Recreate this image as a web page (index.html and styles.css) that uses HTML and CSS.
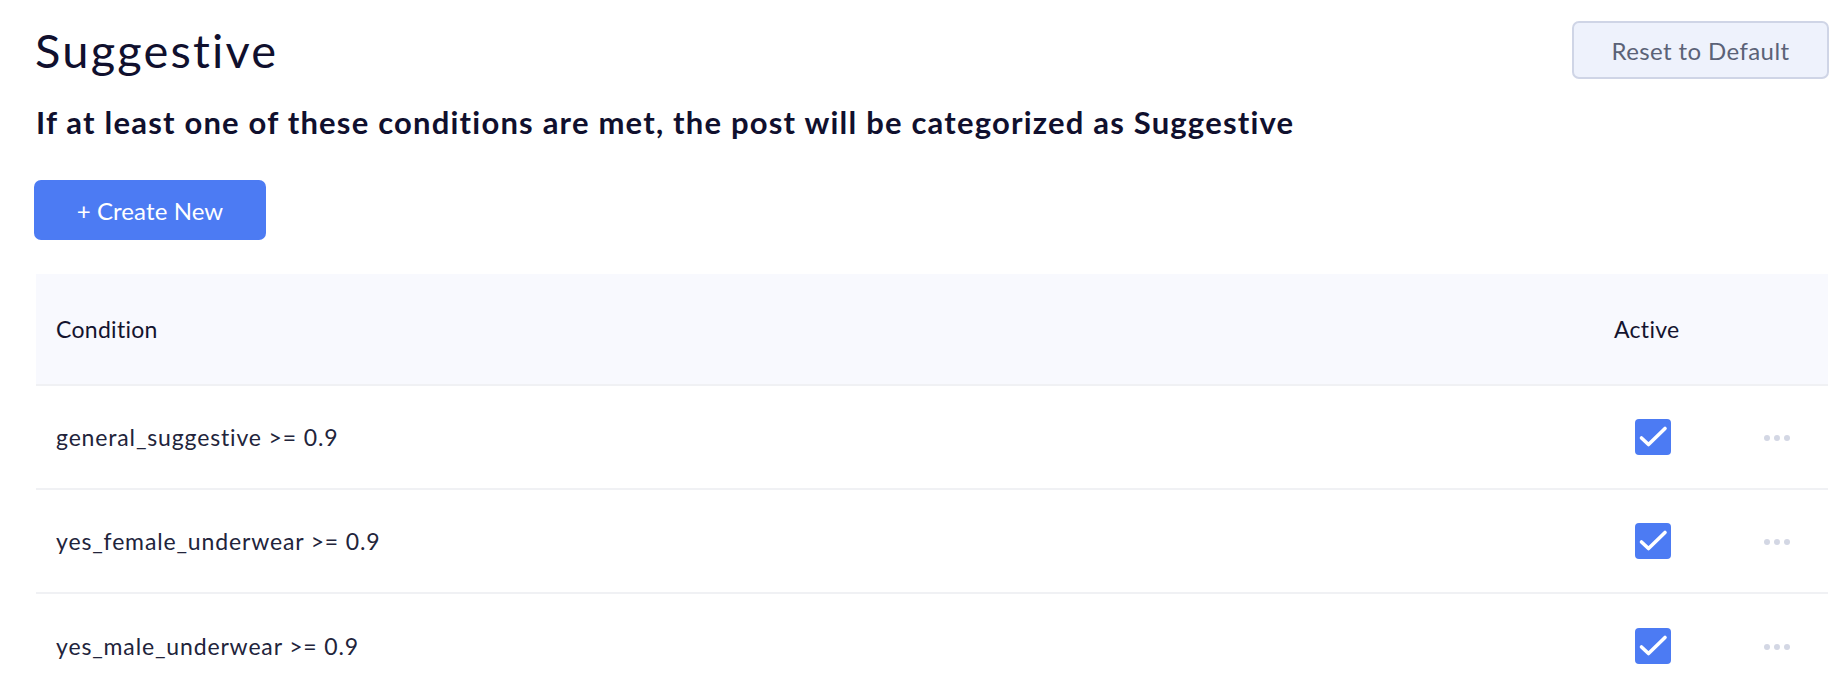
FILE: index.html
```html
<!DOCTYPE html>
<html lang="en">
<head>
<meta charset="utf-8">
<title>Suggestive</title>
<link rel="stylesheet" href="styles.css">
</head>
<body>
<div class="page">
  <div class="top">
    <h1 class="title">Suggestive</h1>
    <button class="btn-reset">Reset to Default</button>
  </div>
  <h2 class="subtitle">If at least one of these conditions are met, the post will be categorized as Suggestive</h2>
  <button class="btn-create">+ Create New</button>
  <div class="table">
    <div class="row head">
      <div class="cell cond">Condition</div>
      <div class="cell active">Active</div>
      <div class="cell actions"></div>
    </div>
    <div class="row">
      <div class="cell cond">general_suggestive &gt;= 0.9</div>
      <div class="cell active"><span class="check"><svg width="36" height="36" viewBox="0 0 36 36"><polyline points="6.5,19 13.5,25.5 30,9.5" fill="none" stroke="#fff" stroke-width="3.6" stroke-linecap="round" stroke-linejoin="round"/></svg></span></div>
      <div class="cell actions"><span class="dots"><i></i><i></i><i></i></span></div>
    </div>
    <div class="row">
      <div class="cell cond">yes_female_underwear &gt;= 0.9</div>
      <div class="cell active"><span class="check"><svg width="36" height="36" viewBox="0 0 36 36"><polyline points="6.5,19 13.5,25.5 30,9.5" fill="none" stroke="#fff" stroke-width="3.6" stroke-linecap="round" stroke-linejoin="round"/></svg></span></div>
      <div class="cell actions"><span class="dots"><i></i><i></i><i></i></span></div>
    </div>
    <div class="row">
      <div class="cell cond">yes_male_underwear &gt;= 0.9</div>
      <div class="cell active"><span class="check"><svg width="36" height="36" viewBox="0 0 36 36"><polyline points="6.5,19 13.5,25.5 30,9.5" fill="none" stroke="#fff" stroke-width="3.6" stroke-linecap="round" stroke-linejoin="round"/></svg></span></div>
      <div class="cell actions"><span class="dots"><i></i><i></i><i></i></span></div>
    </div>
  </div>
</div>
</body>
</html>
```
FILE: styles.css
```css
* { box-sizing: border-box; }
html, body { margin: 0; padding: 0; background: #ffffff; }
body {
  font-family: Lato, "Liberation Sans", sans-serif;
  color: #12122f;
  overflow: hidden;
}
.page {
  padding: 21px 19px 0 34px;
}
.top {
  display: flex;
  align-items: center;
  justify-content: space-between;
  height: 58px;
}
.title {
  margin: 0 0 0 1px;
  font-size: 47px;
  font-weight: 400;
  line-height: 1.2;
  letter-spacing: 2.2px;
  color: #10102e;
}
.btn-reset {
  width: 257px;
  height: 58px;
  border: 2px solid #cfd5e6;
  border-radius: 7px;
  background: #eef2fc;
  color: #5b6277;
  font-family: Lato, "Liberation Sans", sans-serif;
  font-size: 24px;
  letter-spacing: 0.4px;
  padding: 0;
}
.subtitle {
  margin: 25px 0 0 2px;
  font-size: 31px;
  font-weight: 700;
  line-height: 37px;
  letter-spacing: 1.2px;
  color: #10102e;
}
.btn-create {
  display: flex;
  align-items: center;
  justify-content: center;
  margin-top: 39px;
  width: 232px;
  height: 60px;
  border: 0;
  border-radius: 7px;
  background: #4c7bf3;
  color: #ffffff;
  font-family: Lato, "Liberation Sans", sans-serif;
  font-size: 24px;
  font-weight: 400;
  letter-spacing: 0.1px;
  padding: 0;
}
.table {
  margin: 34px 1px 0 2px;
}
.row {
  display: grid;
  grid-template-columns: 1fr 134px 98px;
  height: 104px;
  border-bottom: 2px solid #f0f1f4;
}
.row:last-child {
  border-bottom: 0;
}
.row.head {
  height: 112px;
  background: #f8f9fe;
}
.cell {
  display: flex;
  align-items: center;
}
.cond {
  padding-left: 20px;
  font-size: 23px;
  color: #22243b;
  letter-spacing: 0.85px;
}
.head .cell {
  font-size: 23px;
  letter-spacing: 0.3px;
  color: #14142f;
}
.active {
  padding-left: 18px;
}
.head .active {
  padding-left: 18px;
}
.check {
  display: block;
  width: 36px;
  height: 36px;
  margin-left: 21px;
  border-radius: 4px;
  background: #4c7bf3;
}
.check svg { display: block; }
.actions {
  justify-content: center;
}
.dots {
  display: flex;
  gap: 3.5px;
  margin-left: -4px;
  margin-top: 2px;
}
.dots i {
  display: block;
  width: 6.5px;
  height: 6.5px;
  border-radius: 50%;
  background: #d3d7e4;
}
```
